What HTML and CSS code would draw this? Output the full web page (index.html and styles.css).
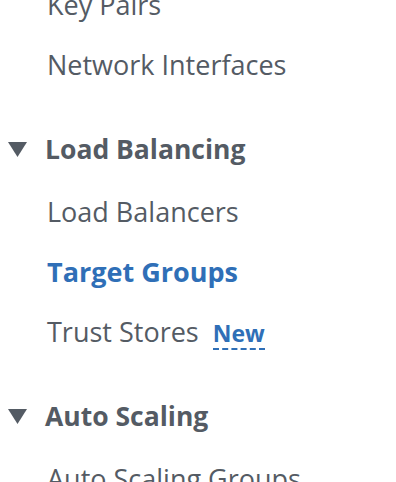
FILE: index.html
```html
<!DOCTYPE html>
<html>
<head>
<meta charset="utf-8">
<link rel="stylesheet" href="styles.css">
</head>
<body>
<nav class="nav">
  <ul class="list">
    <li class="item"><a class="link">Key Pairs</a></li>
    <li class="item"><a class="link">Network Interfaces</a></li>
  </ul>
  <section class="group">
    <h3 class="heading">
      <svg class="caret" width="19" height="15" viewBox="0 0 19 15"><polygon points="0,0 19,0 9.5,15" fill="#545b64"/></svg>
      <span>Load Balancing</span>
    </h3>
    <ul class="list">
      <li class="item"><a class="link">Load Balancers</a></li>
      <li class="item"><a class="link active">Target Groups</a></li>
      <li class="item"><a class="link">Trust Stores</a><span class="badge">New</span></li>
    </ul>
  </section>
  <section class="group">
    <h3 class="heading">
      <svg class="caret" width="19" height="15" viewBox="0 0 19 15"><polygon points="0,0 19,0 9.5,15" fill="#545b64"/></svg>
      <span>Auto Scaling</span>
    </h3>
    <ul class="list">
      <li class="item"><a class="link">Auto Scaling Groups</a></li>
    </ul>
  </section>
</nav>
</body>
</html>
```
FILE: styles.css
```css
html, body {
  margin: 0;
  padding: 0;
  background: #ffffff;
  overflow: hidden;
}
body {
  font-family: "Open Sans", "Noto Sans", sans-serif;
  color: #545b64;
  font-size: 27px;
}
.nav {
  margin-top: -25px;
}
.list {
  list-style: none;
  margin: 0;
  padding: 0;
}
.item {
  display: flex;
  align-items: baseline;
  height: 60px;
  line-height: 60px;
  padding-left: 47px;
}
.link {
  color: #545b64;
  text-decoration: none;
}
.link.active {
  color: #2f6fb7;
  font-weight: 700;
}
.badge {
  margin-left: 14px;
  font-size: 23px;
  font-weight: 700;
  color: #2f6fb7;
  line-height: 30px;
  border-bottom: 2px dashed #2f6fb7;
}
.group {
  margin-top: 24px;
}
.heading {
  display: flex;
  align-items: center;
  margin: 0;
  height: 63px;
  padding-bottom: 3px;
  box-sizing: border-box;
  font-size: 26.5px;
  font-weight: 700;
  color: #545b64;
  line-height: 60px;
}
.caret {
  margin-left: 8px;
  margin-right: 18px;
  flex: none;
}
```
